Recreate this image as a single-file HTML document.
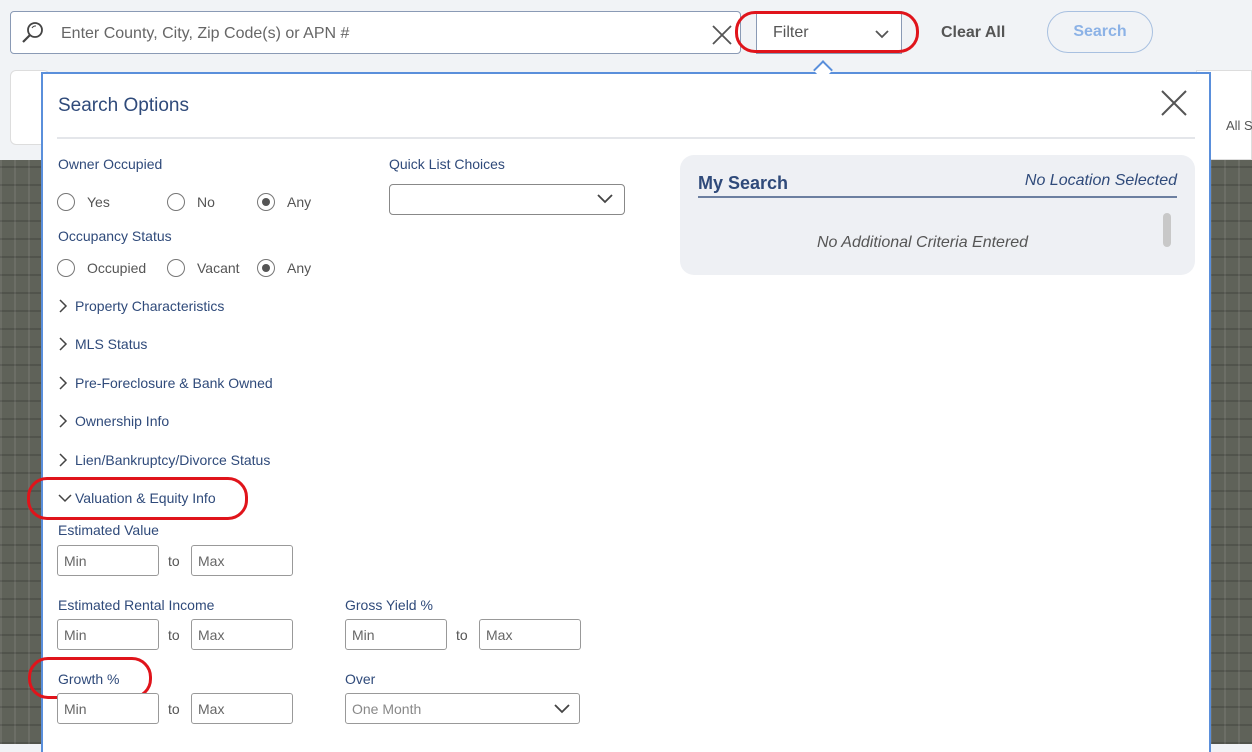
<!DOCTYPE html>
<html><head><meta charset="utf-8"><style>
*{box-sizing:border-box;margin:0;padding:0}
body{width:1252px;height:744px;overflow:hidden;background:#f1f3f6;font-family:"Liberation Sans",Arial,sans-serif;position:relative}
.abs{position:absolute}
.map{background:#5f6259;background-image:repeating-linear-gradient(90deg,rgba(255,255,255,.08) 0 2px,transparent 2px 14px),repeating-linear-gradient(0deg,rgba(0,0,0,.15) 0 2px,transparent 2px 18px)}
.lbl{color:#2f4a7a;font-size:14px}
.radio{display:inline-block;width:18px;height:18px;border:1px solid #777;border-radius:50%;position:absolute;background:#fff}
.radio.on::after{content:"";position:absolute;left:4px;top:4px;width:8px;height:8px;border-radius:50%;background:#555}
.rt{position:absolute;color:#555;font-size:14px}
.inp{position:absolute;width:102px;height:31px;border:1px solid #999;border-radius:3px;background:#fff;color:#666;font-size:14px;padding:7px 6px}
.to{position:absolute;color:#555;font-size:14px}
.sec{position:absolute;left:75px;color:#2f4a7a;font-size:14px}
.chev{position:absolute;left:58px}
.ring{position:absolute;border:3px solid #e0141b;border-radius:20px}
</style></head><body>
<div class="abs map" style="left:0;top:160px;width:42px;height:584px"></div>
<div class="abs map" style="left:1210px;top:160px;width:42px;height:584px"></div>
<div class="abs" style="left:1196px;top:70px;width:56px;height:90px;background:#fff;border:1px solid #ddd"></div>
<div class="abs" style="left:1226px;top:118px;font-size:13px;color:#555;white-space:nowrap">All S</div>
<div class="abs" style="left:10px;top:70px;width:40px;height:75px;background:#fff;border-radius:6px;border:1px solid #ddd"></div>
<div class="abs" style="left:10px;top:11px;width:731px;height:43px;background:#fff;border:1px solid #8a9ab5;border-radius:4px"></div>
<svg class="abs" style="left:20px;top:20px" width="26" height="26" viewBox="0 0 26 26"><circle cx="15" cy="10" r="7" fill="none" stroke="#444" stroke-width="1.8"/><path d="M10 15 L3 22" stroke="#444" stroke-width="2.2"/><path d="M12 8a4 4 0 0 1 4-2" stroke="#444" fill="none"/></svg>
<div class="abs" style="left:61px;top:25px;font-size:16px;color:#666">Enter County, City, Zip Code(s) or APN #</div>
<svg class="abs" style="left:711px;top:24px" width="22" height="22"><path d="M2 2L20 20M20 2L2 20" stroke="#555" stroke-width="1.8"/></svg>
<div class="abs" style="left:756px;top:11px;width:146px;height:43px;background:#fff;border:1px solid #8a9ab5"></div>
<div class="abs" style="left:773px;top:24px;font-size:16px;color:#555">Filter</div>
<svg class="abs" style="left:874px;top:28px" width="16" height="12"><path d="M2 3L8 9L14 3" stroke="#555" stroke-width="1.8" fill="none"/></svg>
<div class="ring" style="left:735px;top:11px;width:184px;height:42px"></div>
<div class="abs" style="left:941px;top:24px;font-size:16px;font-weight:bold;color:#555">Clear All</div>
<div class="abs" style="left:1047px;top:11px;width:106px;height:42px;border:1px solid #a8c0e0;border-radius:21px;color:#8cb2e6;font-size:16px;font-weight:bold;text-align:center;line-height:40px">Search</div>
<div class="abs" style="left:41px;top:72px;width:1170px;height:680px;background:#fff;border:2px solid #5a8fdb;border-bottom:none"></div>
<div class="abs" style="left:816px;top:63px;width:14px;height:14px;background:#fff;border-left:2px solid #5a8fdb;border-top:2px solid #5a8fdb;transform:rotate(45deg)"></div>
<div class="abs" style="left:58px;top:95px;font-size:19px;color:#2f4a7a">Search Options</div>
<svg class="abs" style="left:1160px;top:89px" width="28" height="28"><path d="M2 2L26 26M26 2L2 26" stroke="#555" stroke-width="2"/></svg>
<div class="abs" style="left:57px;top:137px;width:1138px;height:2px;background:#e4e6ea"></div>
<div class="abs lbl" style="left:58px;top:156px">Owner Occupied</div>
<div class="radio" style="left:57px;top:193px"></div><div class="rt" style="left:87px;top:194px">Yes</div>
<div class="radio" style="left:167px;top:193px"></div><div class="rt" style="left:197px;top:194px">No</div>
<div class="radio on" style="left:257px;top:193px"></div><div class="rt" style="left:287px;top:194px">Any</div>
<div class="abs lbl" style="left:58px;top:228px">Occupancy Status</div>
<div class="radio" style="left:57px;top:259px"></div><div class="rt" style="left:87px;top:260px">Occupied</div>
<div class="radio" style="left:167px;top:259px"></div><div class="rt" style="left:197px;top:260px">Vacant</div>
<div class="radio on" style="left:257px;top:259px"></div><div class="rt" style="left:287px;top:260px">Any</div>
<div class="abs lbl" style="left:389px;top:156px">Quick List Choices</div>
<div class="abs" style="left:389px;top:184px;width:236px;height:31px;border:1px solid #888;border-radius:4px"></div>
<svg class="abs" style="left:596px;top:193px" width="18" height="12"><path d="M2 2L9 9L16 2" stroke="#444" stroke-width="1.8" fill="none"/></svg>
<svg class="chev" style="top:299px" width="10" height="14"><path d="M2 1L8 7L2 13" stroke="#444" stroke-width="1.5" fill="none"/></svg>
<div class="sec" style="top:298px">Property Characteristics</div>
<svg class="chev" style="top:337px" width="10" height="14"><path d="M2 1L8 7L2 13" stroke="#444" stroke-width="1.5" fill="none"/></svg>
<div class="sec" style="top:336px">MLS Status</div>
<svg class="chev" style="top:376px" width="10" height="14"><path d="M2 1L8 7L2 13" stroke="#444" stroke-width="1.5" fill="none"/></svg>
<div class="sec" style="top:375px">Pre-Foreclosure &amp; Bank Owned</div>
<svg class="chev" style="top:414px" width="10" height="14"><path d="M2 1L8 7L2 13" stroke="#444" stroke-width="1.5" fill="none"/></svg>
<div class="sec" style="top:413px">Ownership Info</div>
<svg class="chev" style="top:453px" width="10" height="14"><path d="M2 1L8 7L2 13" stroke="#444" stroke-width="1.5" fill="none"/></svg>
<div class="sec" style="top:452px">Lien/Bankruptcy/Divorce Status</div>
<svg class="chev" style="top:493px" width="14" height="10"><path d="M1 2L7 8L13 2" stroke="#444" stroke-width="1.5" fill="none"/></svg>
<div class="sec" style="top:490px">Valuation &amp; Equity Info</div>
<div class="ring" style="left:27px;top:477px;width:221px;height:43px"></div>
<div class="abs lbl" style="left:58px;top:522px">Estimated Value</div>
<div class="inp" style="left:57px;top:545px">Min</div><div class="to" style="left:168px;top:553px">to</div><div class="inp" style="left:191px;top:545px">Max</div>
<div class="abs lbl" style="left:58px;top:597px">Estimated Rental Income</div>
<div class="inp" style="left:57px;top:619px">Min</div><div class="to" style="left:168px;top:627px">to</div><div class="inp" style="left:191px;top:619px">Max</div>
<div class="abs lbl" style="left:345px;top:597px">Gross Yield %</div>
<div class="inp" style="left:345px;top:619px">Min</div><div class="to" style="left:456px;top:627px">to</div><div class="inp" style="left:479px;top:619px">Max</div>
<div class="abs lbl" style="left:58px;top:671px">Growth %</div>
<div class="ring" style="left:28px;top:657px;width:124px;height:42px"></div>
<div class="inp" style="left:57px;top:693px">Min</div><div class="to" style="left:168px;top:701px">to</div><div class="inp" style="left:191px;top:693px">Max</div>
<div class="abs lbl" style="left:345px;top:671px">Over</div>
<div class="inp" style="left:345px;top:693px;width:235px;color:#888">One Month</div>
<svg class="abs" style="left:553px;top:703px" width="18" height="12"><path d="M2 2L9 9L16 2" stroke="#444" stroke-width="1.8" fill="none"/></svg>
<div class="abs" style="left:680px;top:155px;width:515px;height:120px;background:#eef0f4;border-radius:14px"></div>
<div class="abs" style="left:698px;top:173px;font-size:18px;font-weight:bold;color:#2f4a7a">My Search</div>
<div class="abs" style="left:1004px;top:172px;width:173px;text-align:right;font-size:16px;font-style:italic;color:#2f4a7a;white-space:nowrap">No Location Selected</div>
<div class="abs" style="left:698px;top:196px;width:479px;height:2px;background:#6c7fa0"></div>
<div class="abs" style="left:817px;top:234px;font-size:16px;font-style:italic;color:#555">No Additional Criteria Entered</div>
<div class="abs" style="left:1163px;top:213px;width:8px;height:34px;background:#c8c8c8;border-radius:4px"></div>
</body></html>
